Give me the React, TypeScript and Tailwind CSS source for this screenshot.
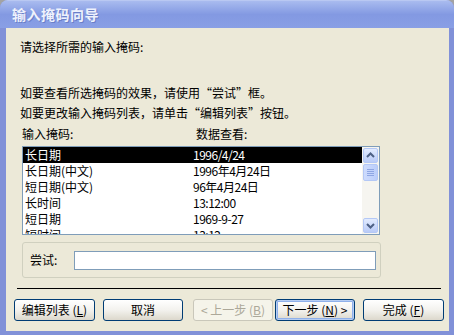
import React from "react";

const rows: [string, string][] = [
  ["长日期", "1996/4/24"],
  ["长日期(中文)", "1996年4月24日"],
  ["短日期(中文)", "96年4月24日"],
  ["长时间", "13:12:00"],
  ["短日期", "1969-9-27"],
  ["短时间", "13:12"],
];

function ScrollBtn({ down }: { down?: boolean }) {
  return (
    <div className="w-[15px] h-[15px] mx-auto rounded-[2px] border border-[#b4c8f6] bg-gradient-to-b from-[#e2ebfe] to-[#b9cbf7] flex items-center justify-center">
      <svg width="9" height="7" viewBox="0 0 9 7">
        {down ? (
          <path d="M1 2 L4.5 5.5 L8 2" fill="none" stroke="#4d6185" strokeWidth="2" />
        ) : (
          <path d="M1 5 L4.5 1.5 L8 5" fill="none" stroke="#4d6185" strokeWidth="2" />
        )}
      </svg>
    </div>
  );
}

function Btn({
  children,
  w,
  disabled,
  def,
  className = "",
}: {
  children: React.ReactNode;
  w: string;
  disabled?: boolean;
  def?: boolean;
  className?: string;
}) {
  const base =
    "h-[22px] rounded-[3px] flex items-center justify-center text-[12px] leading-[16px] " + w + " " + className + " ";
  if (disabled)
    return (
      <div className={base + "border border-[#c9c7ba] bg-[#f5f4ea] text-[#aca899]"}>{children}</div>
    );
  return (
    <div
      className={
        base +
        "border border-[#003c74] bg-gradient-to-b from-[#ffffff] via-[#f3f2ee] to-[#dcd8cc] text-black " +
        (def ? "shadow-[inset_0_0_0_1px_#b6cdf3,inset_0_0_0_2px_#8fb0ea]" : "")
      }
    >
      {children}
    </div>
  );
}

export default function App() {
  return (
    <div className="w-[454px] h-[335px] bg-[#a3a3a3] overflow-hidden font-['Noto_Sans_CJK_SC',sans-serif]">
      <div className="w-full h-full flex flex-col rounded-t-[8px] overflow-hidden bg-[#8191d8]">
        {/* title bar */}
        <div className="h-[28px] shrink-0 bg-gradient-to-b from-[#a9bbef] via-[#8399e2] to-[#899fe5] border-t border-[#b9c8f2] flex items-center pl-[12px]">
          <span className="text-[14px] font-bold text-[#eef2fd] tracking-[0.5px] [text-shadow:1px_1px_0_#6a7fc8]">
            输入掩码向导
          </span>
        </div>
        {/* body */}
        <div className="flex-1 flex pl-[6px] pr-[5px] pb-[4px]">
          <div className="flex-1 bg-[#ece9d8] flex flex-col text-[12px] leading-[16px] text-black">
            <div className="mt-[11px] ml-[14px]">请选择所需的输入掩码:</div>
            <div className="mt-[30px] ml-[14px]">如要查看所选掩码的效果，请使用“尝试”框。</div>
            <div className="mt-[4px] ml-[14px]">如要更改输入掩码列表，请单击“编辑列表”按钮。</div>
            <div className="mt-[5px] ml-[16px] flex">
              <span className="w-[174px]">输入掩码:</span>
              <span>数据查看:</span>
            </div>
            {/* list */}
            <div className="mt-[4px] ml-[16px] w-[358px] h-[89px] border border-[#7f9db9] bg-white flex overflow-hidden">
              <div className="flex-1 flex flex-col overflow-hidden">
                {rows.map(([a, b], i) => (
                  <div
                    key={i}
                    className={
                      "h-[16px] shrink-0 flex pl-[2px] leading-[16px] " +
                      (i === 0 ? "bg-black text-white" : "text-black")
                    }
                  >
                    <span className="w-[168px]">{a}</span>
                    <span className="tracking-[-0.5px]">{b}</span>
                  </div>
                ))}
              </div>
              <div className="w-[17px] bg-[#f6f5f0] flex flex-col pt-[1px] pb-[1px]">
                <ScrollBtn />
                <div className="w-[15px] h-[17px] mx-auto mt-[1px] rounded-[2px] border border-[#b4c8f6] bg-gradient-to-r from-[#cddbfd] to-[#bccefa] flex flex-col items-center justify-center gap-[1px]">
                  <div className="w-[7px] h-[1px] bg-[#8ea6e3]" />
                  <div className="w-[7px] h-[1px] bg-[#8ea6e3]" />
                  <div className="w-[7px] h-[1px] bg-[#8ea6e3]" />
                  <div className="w-[7px] h-[1px] bg-[#8ea6e3]" />
                </div>
                <div className="flex-1" />
                <ScrollBtn down />
              </div>
            </div>
            {/* group box */}
            <div className="mt-[7px] ml-[16px] w-[359px] h-[36px] border border-[#d0d0bf] rounded-[3px] flex items-center pl-[7px]">
              <span className="w-[44px]">尝试:</span>
              <div className="w-[302px] h-[19px] border border-[#7f9db9] bg-white" />
            </div>
            {/* separator */}
            <div className="mt-[10px] ml-[11px] w-[424px] h-[1px] bg-[#000000]" />
            {/* buttons */}
            <div className="mt-[10px] ml-[8px] flex">
              <Btn w="w-[81px]">
                编辑列表 (<u>L</u>)
              </Btn>
              <Btn w="w-[80px]" className="ml-[8px]">
                取消
              </Btn>
              <Btn w="w-[80px]" className="ml-[10px]" disabled>
                &lt; 上一步 (<u>B</u>)
              </Btn>
              <Btn w="w-[80px]" className="ml-[2px]" def>
                下一步 (<u>N</u>) &gt;
              </Btn>
              <Btn w="w-[81px]" className="ml-[8px]">
                完成 (<u>F</u>)
              </Btn>
            </div>
          </div>
        </div>
      </div>
    </div>
  );
}
